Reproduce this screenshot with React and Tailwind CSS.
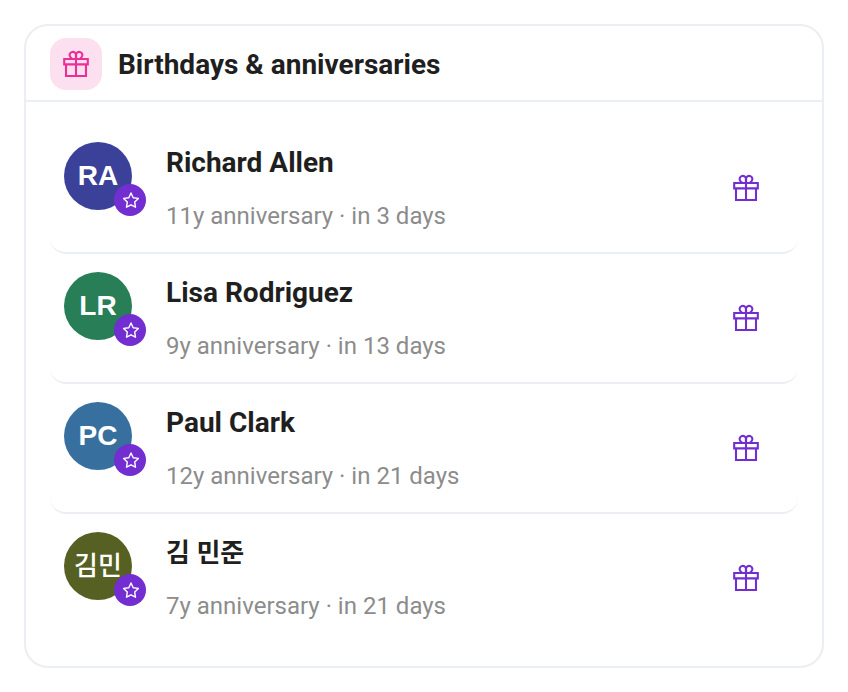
const latin = {
  avatar: 'text-[28px] font-bold',
  name: 'text-[28px] font-bold',
}
const korean = {
  avatar: 'text-[26px] font-medium',
  name: 'text-[26px] font-bold',
}

const people = [
  { initials: 'RA', name: 'Richard Allen', years: 11, days: 3, color: 'bg-[#3b4199]', type: latin },
  { initials: 'LR', name: 'Lisa Rodriguez', years: 9, days: 13, color: 'bg-[#277e57]', type: latin },
  { initials: 'PC', name: 'Paul Clark', years: 12, days: 21, color: 'bg-[#376f9f]', type: latin },
  { initials: '김민', name: '김 민준', years: 7, days: 21, color: 'bg-[#566022]', type: korean },
]

function GiftIcon() {
  return (
    <svg width="28" height="28" viewBox="0 0 28 28" fill="none" stroke="currentColor" strokeWidth="2.1" aria-hidden="true">
      <path d="M2.2 9H25.8V14.4H2.2Z" />
      <path d="M4 14.4V26H24V14.4" />
      <path d="M14 4.6V26" />
      <path d="M14 8.6V5.1A3.2 3.2 0 1 0 8.6 7.4L9.8 8.6" />
      <path d="M14 8.6V5.1A3.2 3.2 0 1 1 19.4 7.4L18.2 8.6" />
    </svg>
  )
}

function StarIcon() {
  return (
    <svg width="20" height="20" viewBox="0 0 20 20" fill="none" stroke="currentColor" strokeWidth="1.4" strokeLinejoin="round" aria-hidden="true">
      <path d="M11 3L13.2 7.7L18.4 8.4L14.7 12.1L15.5 17.2L11 14.8L6.5 17.2L7.3 12.1L3.6 8.4L8.8 7.7Z" />
    </svg>
  )
}

function Person({ person }) {
  return (
    <li className="flex items-center h-[130px] px-3.5 rounded-2xl border-b-2 border-[#ebeef2] last:h-32 last:border-b-0">
      <div className={`relative self-start mt-[18px] size-[68px] shrink-0 rounded-full flex items-center justify-center text-white leading-9 font-['Liberation_Sans','Noto_Sans_CJK_KR',sans-serif] ${person.type.avatar} ${person.color}`}>
        {person.initials}
        <span className="absolute -right-3.5 -bottom-1.5 size-8 rounded-full bg-[#722ed1] text-white flex items-center justify-center">
          <StarIcon />
        </span>
      </div>
      <div className="flex-1 min-w-0 self-start ml-[34px] mt-4">
        <h3 className={`leading-[46px] text-[#1f1f1f] truncate ${person.type.name}`}>{person.name}</h3>
        <p className="mt-2.5 text-2xl leading-10 text-[#8c8c8c] truncate">
          {person.years}y anniversary · in {person.days} days
        </p>
      </div>
      <button type="button" aria-label={`Send a gift to ${person.name}`} className="size-14 mr-2.5 shrink-0 flex items-center justify-center text-[#722ed1] cursor-pointer">
        <GiftIcon />
      </button>
    </li>
  )
}

export default function App() {
  return (
    <main className="min-h-screen bg-white p-6 font-[Roboto,'Noto_Sans_CJK_KR',sans-serif]">
      <section className="rounded-3xl border-2 border-[#ebeef2] bg-white">
        <header className="flex items-center gap-4 px-6 pt-3 pb-2.5 border-b-2 border-[#ebeef2]">
          <span className="size-[52px] shrink-0 rounded-2xl bg-[#fce0f0] text-[#eb2f96] flex items-center justify-center">
            <GiftIcon />
          </span>
          <h2 className="pt-0.5 text-[28px] leading-[46px] font-bold text-[#1f1f1f]">Birthdays &amp; anniversaries</h2>
        </header>
        <ul className="px-6 pt-[22px] pb-6">
          {people.map(p => <Person key={p.name} person={p} />)}
        </ul>
      </section>
    </main>
  )
}
